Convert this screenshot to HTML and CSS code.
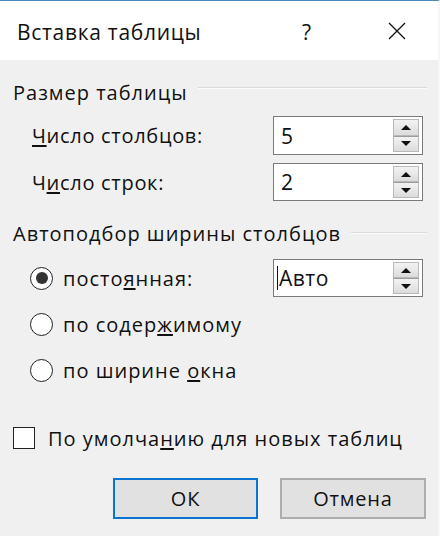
FILE: index.html
```html
<!DOCTYPE html>
<html lang="ru">
<head>
<meta charset="utf-8">
<title>Вставка таблицы</title>
<link rel="stylesheet" href="styles.css">
</head>
<body>
<div class="window">
  <div class="titlebar">
    <div class="title">Вставка таблицы</div>
    <div class="help">?</div>
    <div class="close">
      <svg width="18" height="18" viewBox="0 0 18 18"><path d="M1 1 L17 17 M17 1 L1 17" stroke="#111" stroke-width="1.3" fill="none"/></svg>
    </div>
  </div>
  <div class="content">
    <div class="group-head head-size">
      <span class="group-title">Размер таблицы</span>
      <span class="group-line"></span>
    </div>
    <div class="field-row row-cols">
      <span class="label"><u>Ч</u>исло столбцов:</span>
      <div class="spin">
        <span class="spin-value">5</span>
        <div class="spin-btns">
          <span class="spin-btn"><span class="arrow-up"></span></span>
          <span class="spin-btn"><span class="arrow-down"></span></span>
        </div>
      </div>
    </div>
    <div class="field-row row-rows">
      <span class="label">Ч<u>и</u>сло строк:</span>
      <div class="spin">
        <span class="spin-value">2</span>
        <div class="spin-btns">
          <span class="spin-btn"><span class="arrow-up"></span></span>
          <span class="spin-btn"><span class="arrow-down"></span></span>
        </div>
      </div>
    </div>
    <div class="group-head head-fit">
      <span class="group-title">Автоподбор ширины столбцов</span>
      <span class="group-line"></span>
    </div>
    <div class="radio-row row-fixed">
      <span class="radio checked"></span>
      <span class="radio-label">посто<u>я</u>нная:</span>
      <div class="spin spin-auto">
        <span class="caret"></span><span class="spin-value">Авто</span>
        <div class="spin-btns">
          <span class="spin-btn"><span class="arrow-up"></span></span>
          <span class="spin-btn"><span class="arrow-down"></span></span>
        </div>
      </div>
    </div>
    <div class="radio-row">
      <span class="radio"></span>
      <span class="radio-label">по содер<u>ж</u>имому</span>
    </div>
    <div class="radio-row">
      <span class="radio"></span>
      <span class="radio-label">по ширине <u>о</u>кна</span>
    </div>
    <div class="check-row">
      <span class="checkbox"></span>
      <span class="check-label">По умолча<u>н</u>ию для новых таблиц</span>
    </div>
    <div class="buttons">
      <button class="btn btn-default">ОК</button>
      <button class="btn">Отмена</button>
    </div>
  </div>
</div>
</body>
</html>
```
FILE: styles.css
```css
* { box-sizing: border-box; }
html, body { margin: 0; padding: 0; }
body {
  background: #f0f0f0;
  font-family: "Open Sans", "Noto Sans", sans-serif;
  color: #111;
  width: 440px;
  height: 536px;
  overflow: hidden;
}
.window {
  width: 440px;
  height: 536px;
  border-top: 1px solid #4f88c0;
  border-right: 2px solid #f7f7f7;
  background: #f0f0f0;
  display: flex;
  flex-direction: column;
}
.titlebar {
  height: 59px;
  background: #fff;
  display: flex;
  align-items: center;
  flex-shrink: 0;
}
.title {
  font-size: 21px;
  padding-left: 17px;
  width: 302px;
  letter-spacing: 0.7px;
  padding-top: 2px;
}
.help {
  font-size: 21px;
  width: 86px;
  padding-top: 2px;
}
.close {
  width: 20px;
  height: 18px;
  display: flex;
}
.content {
  display: flex;
  flex-direction: column;
  font-size: 20px;
  letter-spacing: 1px;
}
.group-head {
  display: flex;
  align-items: center;
  height: 24px;
  padding-left: 13px;
  padding-right: 11px;
  gap: 10px;
}
.head-size { margin-top: 20px; }
.head-size .group-line { margin-top: -9px; }
.head-fit { margin-top: 20px; }
.group-title { white-space: nowrap; }
.group-line {
  flex: 1;
  height: 2px;
  border-top: 1px solid #dadada;
  border-bottom: 1px solid #fbfbfb;
}
.field-row {
  display: flex;
  align-items: center;
  height: 39px;
  padding-left: 32px;
}
.row-cols { margin-top: 12px; }
.row-rows { margin-top: 8px; height: 38px; }
.label { width: 241px; letter-spacing: 0.7px; }
u { text-decoration-thickness: 1.5px; text-underline-offset: 2px; }
.spin {
  width: 150px;
  height: 100%;
  background: #fff;
  border: 1px solid #7a7a7a;
  display: flex;
  align-items: center;
  padding-left: 7px;
  padding-right: 3px;
}
.spin-value { flex: 1; font-size: 21px; letter-spacing: 0.5px; }
.spin-btns {
  display: flex;
  flex-direction: column;
  align-self: stretch;
  padding: 2px 0;
  width: 26px;
}
.spin-btn {
  flex: 1;
  display: flex;
  align-items: center;
  justify-content: center;
  background: linear-gradient(#f2f2f2, #dcdcdc);
  border: 1px solid #b9b9b9;
}
.spin-btn + .spin-btn { border-top-color: #9c9c9c; }
.arrow-up, .arrow-down {
  width: 0; height: 0;
  border-left: 5px solid transparent;
  border-right: 5px solid transparent;
}
.arrow-up { border-bottom: 5px solid #111; }
.arrow-down { border-top: 5px solid #111; }
.radio-row {
  display: flex;
  align-items: center;
  height: 38px;
  margin-top: 8px;
  padding-left: 30px;
}
.row-fixed { margin-top: 14px; }
.radio {
  width: 23px;
  height: 23px;
  border: 1.6px solid #222;
  border-radius: 50%;
  background: #fff;
  display: flex;
  align-items: center;
  justify-content: center;
  flex-shrink: 0;
}
.radio.checked::after {
  content: "";
  width: 12px;
  height: 12px;
  border-radius: 50%;
  background: #333;
}
.radio-label { margin-left: 10px; width: 210px; }
.spin-auto { padding-left: 3px; }
.caret {
  width: 1px;
  height: 24px;
  background: #111;
  margin-right: 1px;
}
.check-row {
  display: flex;
  align-items: center;
  height: 38px;
  margin-top: 30px;
  padding-left: 13px;
}
.checkbox {
  width: 22px;
  height: 22px;
  border: 1.6px solid #222;
  background: #fff;
  flex-shrink: 0;
}
.check-label { margin-left: 13px; }
.buttons {
  display: flex;
  gap: 22px;
  padding-left: 113px;
  margin-top: 21px;
}
.btn {
  width: 146px;
  height: 41px;
  background: #e1e1e1;
  border: 2px solid #adadad;
  font-family: inherit;
  font-size: 20px;
  letter-spacing: 0.8px;
  color: #111;
  padding: 0;
}
.btn-default {
  width: 145px;
  border: 2px solid #0a74d0;
}
```
